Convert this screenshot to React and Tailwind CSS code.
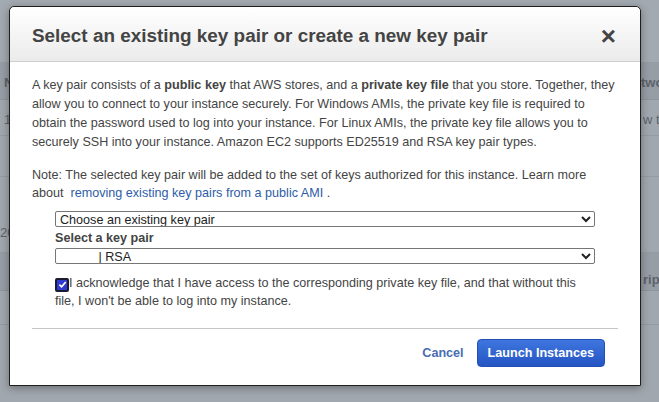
import { useState } from "react";

const rows = [
  { h: "h-[62px]", cls: "bg-[#a3a9b0]" },
  { h: "h-[38px]", cls: "bg-[#979da5] border-b border-[#8e949c]" },
  { h: "h-[36px]", cls: "bg-[#a1a7ae] border-b border-[#959ba3]" },
  { h: "h-[41px]", cls: "bg-[#a1a7ae] border-b border-[#959ba3]" },
  { h: "h-[76px]", cls: "bg-[#a1a7ae] border-b border-[#959ba3]" },
  { h: "h-[38px]", cls: "bg-[#979da5] border-b border-[#8e949c]" },
  { h: "h-[34px]", cls: "bg-[#a1a7ae] border-b border-[#959ba3]" },
  { h: "h-[77px]", cls: "bg-[#a1a7ae]" },
];

const Backdrop = () => (
  <div className="flex flex-col w-full">
    {rows.map((r, i) => (
      <div key={i} className={`${r.h} ${r.cls} w-full`} />
    ))}
  </div>
);

export default function App() {
  const [ack, setAck] = useState(true);

  return (
    <div
      className="relative w-[659px] h-[402px] overflow-hidden bg-[#a1a7ae] text-[#444]"
      style={{ fontFamily: '"Liberation Sans", Arial, sans-serif' }}
    >
      <Backdrop />
      {/* trozos de la tabla que asoman detras del modal */}
      <span className="absolute left-[4px] top-[73px] text-[13px] font-bold text-[#5d636b]">N</span>
      <span className="absolute left-[4px] top-[110px] text-[13px] text-[#5d636b]">1</span>
      <span className="absolute left-[0px] top-[223px] text-[13px] text-[#5d636b]">20</span>
      <span className="absolute left-[641px] top-[73px] text-[13px] font-bold text-[#5d636b] whitespace-nowrap">two</span>
      <span className="absolute left-[643px] top-[110px] text-[13px] text-[#5d636b] whitespace-nowrap">w to</span>
      <span className="absolute left-[643px] top-[270px] text-[13px] font-bold text-[#5d636b] whitespace-nowrap">rip</span>

      {/* modal */}
      <div className="absolute left-[9px] top-[6px] w-[632px] h-[380px] bg-white border border-[#1e1e1e] rounded-t-[5px] shadow-[0_2px_8px_rgba(0,0,0,0.35)] flex flex-col">
        <div className="h-[55px] shrink-0 flex items-center justify-between pl-[22px] pr-[24px] rounded-t-[5px] bg-gradient-to-b from-white to-[#ebebeb] border-b border-[#cfcfcf]">
          <h2 className="text-[18.9px] font-bold text-[#444] pt-[4px]">
            Select an existing key pair or create a new key pair
          </h2>
          <button className="text-[26px] leading-none font-bold text-[#444] pt-[3px]">×</button>
        </div>

        <div className="flex flex-col px-[22px] pt-[14px] text-[12.6px] leading-[19px]">
          <p>
            A key pair consists of a <b>public key</b> that AWS stores, and a <b>private key file</b> that you
            store. Together, they allow you to connect to your instance securely. For Windows AMIs, the private
            key file is required to obtain the password used to log into your instance. For Linux AMIs, the private
            key file allows you to securely SSH into your instance. Amazon EC2 supports ED25519 and RSA key pair
            types.
          </p>
          <p className="mt-[14px] leading-[18px]">
            Note: The selected key pair will be added to the set of keys authorized for this instance. Learn more
            about{"\u00a0 "}
            <a className="text-[#2e5ca8]" href="#">removing existing key pairs from a public AMI</a> .
          </p>

          <div className="ml-[23px] w-[540px] mt-[9px] flex flex-col">
            <select
              className="h-[16px] w-full border border-[#767676] rounded-[2px] text-[12.6px] leading-[14px] text-[#222] bg-white"
              defaultValue="existing"
            >
              <option value="existing">Choose an existing key pair</option>
              <option value="new">Create a new key pair</option>
            </select>
            <label className="font-bold text-[12.6px] leading-[16px] mt-[3px] text-[#444]">Select a key pair</label>
            <select
              className="h-[16px] w-full border border-[#767676] rounded-[2px] text-[12.6px] leading-[14px] text-[#222] bg-white mt-[2px]"
              defaultValue="rsa"
            >
              <option value="rsa">{"\u00a0\u00a0\u00a0\u00a0\u00a0\u00a0\u00a0\u00a0\u00a0\u00a0\u00a0| RSA"}</option>
            </select>

            <p className="mt-[10px] leading-[18px]">
              <span
                onClick={() => setAck(!ack)}
                className="inline-flex align-[-2px] items-center justify-center w-[14px] h-[14px] bg-[#2f3ad1] border-2 border-[#1b1b2e] rounded-[2px] cursor-pointer"
              >
                {ack && (
                  <svg viewBox="0 0 10 10" className="w-[9px] h-[9px]">
                    <path d="M1.5 5.2 L4 7.6 L8.6 2.2" fill="none" stroke="white" strokeWidth="1.8" />
                  </svg>
                )}
              </span>
              I acknowledge that I have access to the corresponding private key file, and that without this file, I
              won't be able to log into my instance.
            </p>
          </div>

          <div className="mt-[18px] border-t border-[#c6c6c6]" />

          <div className="flex justify-end items-center gap-[13px] mt-[10px] pr-[13px]">
            <button className="text-[12.6px] font-bold text-[#4a6db3]">Cancel</button>
            <button className="h-[28px] px-[10px] rounded-[4px] text-[12.6px] font-bold text-white bg-gradient-to-b from-[#3f76de] to-[#2455c3] border border-[#2350b5]">
              Launch Instances
            </button>
          </div>
        </div>
      </div>
    </div>
  );
}
